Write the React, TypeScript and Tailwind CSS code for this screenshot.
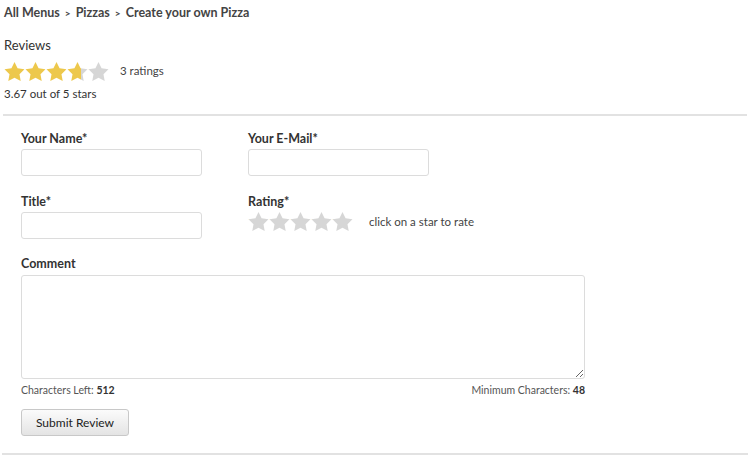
import React from 'react';

const STAR = 'M12 .6l3.5 7.2 7.9 1.1-5.7 5.6 1.4 7.9L12 18.6l-7.1 3.8 1.4-7.9L.6 8.9l7.9-1.1z';

const Star = ({ fill, size, id }: { fill: number; size: number; id: string }) => (
  <svg width={size} height={size} viewBox="0 0 24 23">
    <defs>
      <linearGradient id={id}>
        <stop offset={`${fill * 100}%`} stopColor="#edc84c" />
        <stop offset={`${fill * 100}%`} stopColor="#d6d6d6" />
      </linearGradient>
    </defs>
    <path d={STAR} fill={`url(#${id})`} />
  </svg>
);

const Field = ({ label }: { label: string }) => (
  <div className="flex flex-col w-[181px]">
    <label className="text-[12.5px] font-bold text-[#333] leading-[15px]">{label}</label>
    <input
      type="text"
      className="mt-[3px] h-[27px] border border-[#dcdcdc] rounded-[3px] px-2 text-[13px] outline-none"
    />
  </div>
);

export default function App() {
  const avg = 3.67;
  return (
    <div className="w-[750px] h-[459px] bg-white text-[#444]" style={{ fontFamily: 'Lato, "Open Sans", sans-serif' }}>
      <div className="px-1 pt-[5px]">
        <div className="text-[12.5px] font-bold text-[#444] leading-[16px] flex items-center gap-[5px]">
          <span>All Menus</span>
          <span className="text-[10px]">&gt;</span>
          <span>Pizzas</span>
          <span className="text-[10px]">&gt;</span>
          <span>Create your own Pizza</span>
        </div>
        <div className="mt-[16px] text-[13px] leading-[16px] text-[#333]">Reviews</div>
        <div className="flex items-center mt-[6px] h-[24px]">
          <div className="flex">
            {[0, 1, 2, 3, 4].map((i) => (
              <Star key={i} id={`avg${i}`} size={21} fill={Math.max(0, Math.min(1, avg - i))} />
            ))}
          </div>
          <span className="ml-[11px] text-[11.5px] text-[#444]">3 ratings</span>
        </div>
        <div className="text-[11.5px] leading-[14px] text-[#333] mt-[4px]">3.67 out of 5 stars</div>
      </div>
      <div className="mx-[3px] mt-[13px] h-[2px] bg-[#e2e2e2]" />

      <form className="px-[21px] pt-[15px]">
        <div className="flex gap-[46px]">
          <Field label="Your Name*" />
          <Field label="Your E-Mail*" />
        </div>
        <div className="flex gap-[46px] mt-[18px]">
          <Field label="Title*" />
          <div className="flex flex-col">
            <label className="text-[12.5px] font-bold text-[#333] leading-[15px]">Rating*</label>
            <div className="flex items-center mt-[2px]">
              <div className="flex">
                {[0, 1, 2, 3, 4].map((i) => (
                  <Star key={i} id={`r${i}`} size={21} fill={0} />
                ))}
              </div>
              <span className="ml-[16px] text-[11.5px] text-[#444]">click on a star to rate</span>
            </div>
          </div>
        </div>

        <div className="mt-[17px] w-[564px]">
          <label className="block text-[12.5px] font-bold text-[#333] leading-[15px]">Comment</label>
          <textarea className="mt-[4px] block w-full h-[104px] border border-[#dcdcdc] rounded-[3px] p-2 text-[13px] outline-none" />
          <div className="flex justify-between mt-[4px] text-[10.5px] text-[#555] leading-[14px]">
            <span>
              Characters Left: <b className="text-[#333]">512</b>
            </span>
            <span>
              Minimum Characters: <b className="text-[#333]">48</b>
            </span>
          </div>
          <button
            type="button"
            className="mt-[12px] h-[27px] w-[108px] rounded-[3px] border border-[#c8c8c8] bg-gradient-to-b from-[#fbfbfb] to-[#e4e4e4] text-[12px] text-[#222]"
          >
            Submit Review
          </button>
        </div>
      </form>
      <div className="mx-[2px] mt-[17px] h-[2px] bg-[#e2e2e2]" />
    </div>
  );
}
